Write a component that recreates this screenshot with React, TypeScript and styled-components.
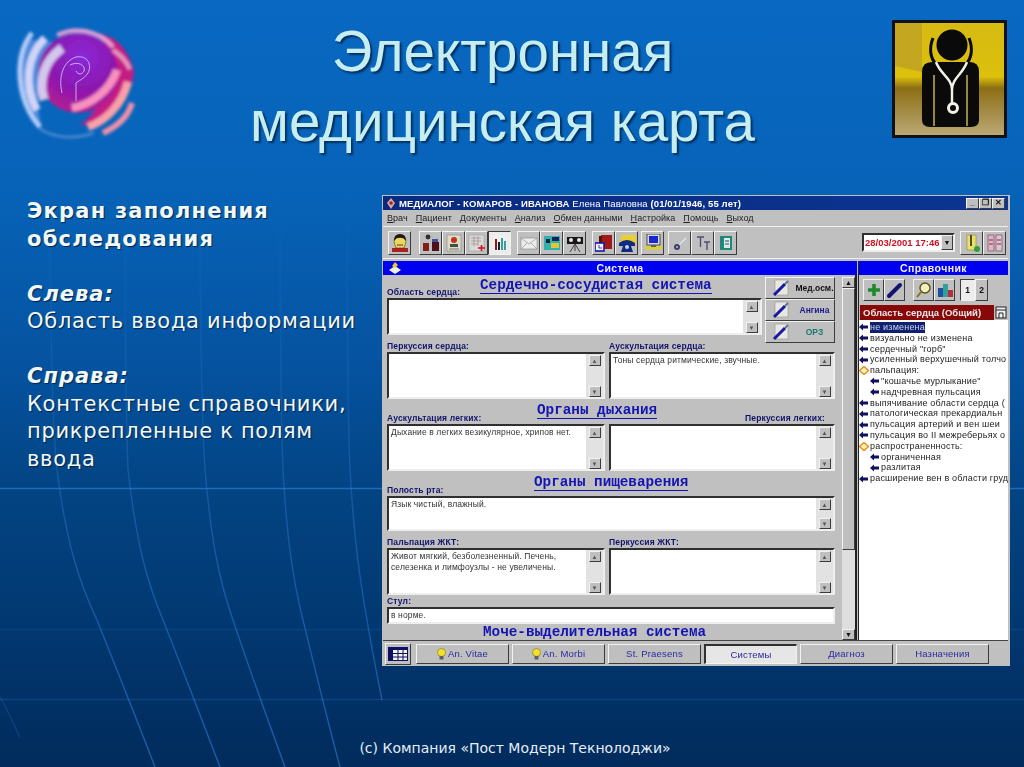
import * as React from 'react';
import styled, {createGlobalStyle} from 'styled-components';

const Global = createGlobalStyle`
  html, body { margin: 0; padding: 0; background: #012a5c; }
`;

const bevel = `
  border: 1px solid;
  border-color: #f2f2f2 #3c3c3c #3c3c3c #f2f2f2;
  background: #bfbfbf;
  box-sizing: border-box;
`;

const sunken = `
  border: 2px solid;
  border-color: #303030 #eeeeee #eeeeee #303030;
  box-sizing: border-box;
`;

/* ---------- slide ---------- */

const Slide = styled.div`
  position: relative;
  width: 1024px;
  height: 767px;
  overflow: hidden;
  display: flex;
  flex-direction: column;
  background: linear-gradient(180deg, #0968c2 0px, #0763b8 190px, #05529f 370px, #034483 490px, #023a74 600px, #012b5c 767px);
`;

const Backdrop = styled.svg`
  position: absolute;
  inset: 0;
`;

const Header = styled.header`
  position: relative;
  height: 195px;
  flex: none;
  display: flex;
  align-items: flex-start;
  box-sizing: border-box;
  padding: 20px 17px 0 10px;
`;

const Title = styled.h1`
  flex: 1;
  margin: -3px 0 0;
  padding: 0 27px 0 0;
  text-align: center;
  font: 400 56.5px/70px "Liberation Sans", sans-serif;
  color: #c6eef0;
  text-shadow: 2px 2px 2px #02305f;
  white-space: nowrap;
`;

const Body = styled.main`
  position: relative;
  display: flex;
  flex: none;
  height: 472px;
`;

const Notes = styled.section`
  width: 382px;
  flex: none;
  box-sizing: border-box;
  padding: 3px 0 0 27px;
  font: 400 21px/27.5px "DejaVu Sans", sans-serif;
  letter-spacing: 0.7px;
  color: #f2f8f8;
  text-shadow: 1px 1px 1px #02254d;
`;

const Note = styled.p`
  margin: 0 0 27.5px;
`;

const Strong = styled.b`
  font-weight: 700;
  letter-spacing: 1.2px;
`;

const Side = styled.b`
  font-weight: 700;
  font-style: italic;
  letter-spacing: 1px;
`;

const Footer = styled.footer`
  position: relative;
  margin-top: 71px;
  padding-left: 6px;
  text-align: center;
  font: 400 14px/20px "DejaVu Sans", sans-serif;
  color: #e6eef6;
`;

/* ---------- application window ---------- */

const Win = styled.div`
  width: 628px;
  height: 471px;
  flex: none;
  display: flex;
  flex-direction: column;
  box-sizing: border-box;
  padding: 1px 2px 0 1px;
  background: #c0c0c0;
  filter: blur(0.35px);
  font-family: "Liberation Sans", sans-serif;
  overflow: hidden;
`;

const TitleBar = styled.div`
  height: 14px;
  flex: none;
  display: flex;
  align-items: center;
  gap: 3px;
  padding: 0 2px 0 3px;
  background: linear-gradient(90deg, #0a2a80, #0b3590);
  color: #fff;
  font-size: 9.5px;
  font-weight: 700;
  letter-spacing: 0.12px;
  white-space: nowrap;
`;

const TitleText = styled.span`
  flex: 1;
`;

const Thin = styled.span`
  font-weight: 400;
`;

const Caption = styled.div`
  display: flex;
  margin-right: 1px;
`;

const CaptionBtn = styled.div`
  ${bevel}
  width: 13px;
  height: 11px;
  display: flex;
  align-items: center;
  justify-content: center;
  color: #111;
  font-size: 8px;
  font-weight: 700;
  line-height: 1;
`;

const MenuBar = styled.nav`
  height: 16px;
  flex: none;
  display: flex;
  align-items: center;
  gap: 8px;
  padding: 0 4px;
  font-size: 9px;
  color: #222;
  border-bottom: 1px solid #f0f0f0;
`;

const MenuItem = styled.span`
  letter-spacing: 0.05px;
`;

const Ul = styled.u`
  text-underline-offset: 1px;
`;

const ToolBar = styled.div`
  height: 32px;
  flex: none;
  display: flex;
  align-items: center;
  padding: 0 2px 0 5px;
  box-sizing: border-box;
  border-bottom: 1px solid #f0f0f0;
`;

const ToolGroup = styled.div<{$gap: number}>`
  display: flex;
  margin-right: ${p => p.$gap}px;
`;

const ToolBtn = styled.div<{$on?: boolean; $w?: number}>`
  ${bevel}
  width: ${p => p.$w ?? 23}px;
  height: 24px;
  display: flex;
  align-items: center;
  justify-content: center;
  ${p => p.$on && 'background: #ececec; border-color: #3c3c3c #f2f2f2 #f2f2f2 #3c3c3c;'}
`;

const DateBox = styled.div`
  ${sunken}
  width: 93px;
  height: 19px;
  margin-left: auto;
  margin-right: 5px;
  background: #fff;
  display: flex;
  align-items: center;
  justify-content: space-between;
  color: #d01020;
  font-size: 9.5px;
  font-weight: 700;
  padding-left: 1px;
`;

const DropBtn = styled.div`
  ${bevel}
  width: 12px;
  height: 15px;
  color: #111;
  font-size: 7px;
  display: flex;
  align-items: center;
  justify-content: center;
`;

const Panes = styled.div`
  flex: 1;
  min-height: 0;
  display: flex;
  margin-top: 2px;
`;

const LeftPane = styled.div`
  width: 474px;
  flex: none;
  display: flex;
  flex-direction: column;
`;

const RightPane = styled.div`
  flex: 1;
  min-width: 0;
  margin-left: 1px;
  display: flex;
  flex-direction: column;
  border-left: 1px solid #222;
`;

const PaneHead = styled.div`
  height: 14px;
  flex: none;
  position: relative;
  display: flex;
  align-items: center;
  justify-content: center;
  background: #0000f0;
  color: #eef;
  font-size: 10.5px;
  font-weight: 700;
  letter-spacing: 0.4px;
`;

const PaneIcon = styled.svg`
  position: absolute;
  left: 5px;
  top: 0;
`;

const FormWrap = styled.div`
  flex: 1;
  min-height: 0;
  display: flex;
  border-right: 2px solid #222;
`;

const Form = styled.div`
  flex: 1;
  min-width: 0;
  overflow: hidden;
  padding: 2px 7px 0 4px;
  display: flex;
  flex-direction: column;
`;

const TopRow = styled.div`
  display: flex;
  gap: 3px;
  height: 58px;
  flex: none;
`;

const TopMain = styled.div`
  flex: 1;
  min-width: 0;
`;

const QuickCol = styled.div`
  width: 70px;
  flex: none;
  display: flex;
  flex-direction: column;
`;

const QuickBtn = styled.div`
  ${bevel}
  height: 22px;
  flex: none;
  display: flex;
  align-items: center;
  gap: 3px;
  padding-left: 6px;
  font-size: 8.5px;
  font-weight: 700;
`;

const QuickText = styled.span<{$color: string}>`
  flex: 1;
  text-align: center;
  color: ${p => p.$color};
`;

const LabelLine = styled.div<{$h: number}>`
  height: ${p => p.$h}px;
  flex: none;
  position: relative;
  display: flex;
  align-items: flex-end;
  justify-content: space-between;
`;

const HalfLine = styled.div<{$h: number}>`
  height: ${p => p.$h}px;
  flex: none;
  display: grid;
  grid-template-columns: 222px 1fr;
  align-items: flex-end;
`;

const Label = styled.span<{$right?: boolean}>`
  font-size: 8.5px;
  line-height: 10px;
  font-weight: 700;
  color: #12126a;
  letter-spacing: 0.15px;
  white-space: nowrap;
  padding-bottom: 1px;
  ${p => p.$right && 'padding-right: 10px;'}
`;

const Heading = styled.span<{$left: number; $top?: number}>`
  position: absolute;
  left: ${p => p.$left}px;
  top: ${p => p.$top ?? 0}px;
  font: 700 14.3px/16px "Liberation Mono", monospace;
  color: #1414b4;
  border-bottom: 1px solid #1414b4;
  white-space: nowrap;
`;

const Pair = styled.div`
  display: grid;
  grid-template-columns: 218px 1fr;
  gap: 4px;
  flex: none;
`;

const Box = styled.div<{$h: number}>`
  ${sunken}
  height: ${p => p.$h}px;
  background: #fff;
  display: flex;
  min-width: 0;
`;

const BoxText = styled.div`
  flex: 1;
  min-width: 0;
  padding: 1px 2px;
  font-size: 8.5px;
  line-height: 11px;
  color: #333;
  letter-spacing: 0.12px;
`;

const MiniBar = styled.div`
  width: 17px;
  flex: none;
  display: flex;
  flex-direction: column;
  justify-content: space-between;
  align-items: center;
  background: #e2e2e2;
  padding: 1px 0 0;
  box-sizing: border-box;
`;

const MiniBtn = styled.div`
  ${bevel}
  width: 12px;
  height: 11px;
  color: #555;
  font-size: 6px;
  line-height: 1;
  display: flex;
  align-items: center;
  justify-content: center;
`;

const MainBar = styled.div`
  width: 13px;
  flex: none;
  margin: 2px 0 0;
  display: flex;
  flex-direction: column;
  background: #dedede;
`;

const MainBtn = styled.div`
  ${bevel}
  height: 11px;
  flex: none;
  color: #111;
  font-size: 7px;
  line-height: 1;
  display: flex;
  align-items: center;
  justify-content: center;
`;

const MainThumb = styled.div`
  ${bevel}
  height: 262px;
  flex: none;
`;

const MainTrack = styled.div`
  flex: 1;
`;

const RefTools = styled.div`
  height: 30px;
  flex: none;
  display: flex;
  align-items: center;
  padding: 0 0 0 4px;
  box-sizing: border-box;
`;

const SmallTool = styled.div<{$on?: boolean; $w?: number; $ml?: number}>`
  ${bevel}
  width: ${p => p.$w ?? 21}px;
  height: 22px;
  margin-left: ${p => p.$ml ?? 0}px;
  display: flex;
  align-items: center;
  justify-content: center;
  font-size: 8.5px;
  font-weight: 700;
  color: #111;
  ${p => p.$on && 'background: #ececec; border-color: #3c3c3c #f2f2f2 #f2f2f2 #3c3c3c;'}
`;

const RefHeader = styled.div`
  height: 15px;
  flex: none;
  display: flex;
  align-items: stretch;
  margin-left: 1px;
`;

const RefName = styled.div`
  flex: 1;
  background: #860808;
  color: #f0e8e8;
  font-size: 9.5px;
  font-weight: 700;
  line-height: 15px;
  padding-left: 3px;
  white-space: nowrap;
  overflow: hidden;
`;

const RefIcon = styled.div`
  width: 14px;
  flex: none;
  display: flex;
  align-items: center;
  justify-content: center;
`;

const Tree = styled.ul`
  flex: 1;
  min-height: 0;
  margin: 0;
  padding: 2px 0 0;
  list-style: none;
  background: #fff;
  overflow: hidden;
`;

const TreeRow = styled.li<{$sub?: boolean}>`
  height: 10.8px;
  display: flex;
  align-items: center;
  gap: 1px;
  padding-left: ${p => (p.$sub ? 11 : 0)}px;
  font-size: 9px;
  line-height: 10.8px;
  letter-spacing: 0.2px;
  color: #222;
  white-space: nowrap;
`;

const Selected = styled.span`
  background: #10206e;
  color: #c8d4f0;
`;

const BottomBar = styled.div`
  height: 26px;
  flex: none;
  display: flex;
  align-items: center;
  padding: 0 0 0 2px;
  border-top: 1px solid #444;
  box-sizing: border-box;
`;

const GridBtn = styled.div`
  ${bevel}
  width: 26px;
  height: 22px;
  margin-right: 5px;
  display: flex;
  align-items: center;
  justify-content: center;
`;

const Tab = styled.div<{$on?: boolean}>`
  ${bevel}
  width: 93px;
  height: 20px;
  margin-right: 3px;
  display: flex;
  align-items: center;
  justify-content: center;
  gap: 2px;
  font-size: 9.5px;
  letter-spacing: 0.2px;
  color: #2a2aa0;
  ${p => p.$on && 'background: #e6e6e6; border-color: #303030 #f2f2f2 #f2f2f2 #303030; border-width: 2px 1px 1px 2px;'}
`;

/* ---------- drawings ---------- */

const Logo = () => (
  <svg width="130" height="118" viewBox="0 0 130 118" style={{flex: 'none', marginTop: 5}}>
    <defs>
      <radialGradient id="ball" cx="0.55" cy="0.3" r="0.8">
        <stop offset="0" stopColor="#8a28d8" />
        <stop offset="0.5" stopColor="#8c18b0" />
        <stop offset="1" stopColor="#c01c88" />
      </radialGradient>
      <filter id="soft" x="-20%" y="-20%" width="140%" height="140%">
        <feGaussianBlur stdDeviation="1.8" />
      </filter>
      <filter id="softer">
        <feGaussianBlur stdDeviation="0.5" />
      </filter>
    </defs>
    <g filter="url(#soft)" fill="none">
      <path d="M16 14 C0 40 6 82 32 104 C24 70 28 40 50 18 Z" fill="#5f93e6" opacity="0.75" />
      <path d="M70 100 C98 102 122 76 124 46 C118 22 104 10 86 8 C112 34 100 78 70 100 Z" fill="#c41c84" />
      <circle cx="68" cy="48" r="40" fill="url(#ball)" />
      <path d="M22 8 C4 30 6 75 30 102" stroke="#b4ccf8" strokeWidth="5" />
      <path d="M35 13 C16 32 14 62 27 85" stroke="#d0d4f6" strokeWidth="8" />
      <path d="M52 23 C34 36 28 56 34 75" stroke="#d4c6ec" strokeWidth="9" />
      <path d="M47 10 C64 2 88 4 103 22" stroke="#e8a0d8" strokeWidth="4" />
      <path d="M103 25 Q114 32 120 44" stroke="#e898c0" strokeWidth="4" />
      <path d="M62 83 C80 80 100 66 107 45" stroke="#f890c0" strokeWidth="8" />
      <path d="M78 102 C96 96 112 80 118 57" stroke="#f8a0a8" strokeWidth="8" />
      <path d="M93 108 C106 102 118 92 122 78" stroke="#f090a8" strokeWidth="6" />
      <path d="M30 104 C46 114 66 114 84 108" stroke="#a8b8f0" strokeWidth="2.5" opacity="0.45" />
    </g>
    <g filter="url(#softer)" fill="none" stroke="#c8c0f0" strokeWidth="0.9">
      <path d="M52 68 C48 50 54 36 66 32 C78 30 82 40 78 48 C74 54 68 56 66 58 V76" />
      <path d="M60 40 C68 36 76 40 74 46 C72 50 68 50 66 46" />
    </g>
  </svg>
);

const Doctor = () => (
  <svg width="115" height="118" viewBox="0 0 115 118" style={{flex: 'none'}}>
    <defs>
      <linearGradient id="gold" x1="0" y1="0" x2="0" y2="1">
        <stop offset="0" stopColor="#d6ba12" />
        <stop offset="0.48" stopColor="#dcc00c" />
        <stop offset="0.58" stopColor="#8c6e14" />
        <stop offset="1" stopColor="#bcaa78" />
      </linearGradient>
    </defs>
    <rect x="1.5" y="1.5" width="112" height="115" fill="url(#gold)" stroke="#101018" strokeWidth="3" />
    <path d="M3 3 H30 V52 L3 46 Z" fill="#c4a620" />
    <path d="M41 18 C37 28 38 38 44 44 M77 18 C81 28 80 38 74 44" stroke="#0a0a0a" strokeWidth="3" fill="none" />
    <circle cx="60" cy="25" r="15.5" fill="#0a0a0a" />
    <path d="M40 42 H78 Q87 42 87 52 V100 Q87 107 79 107 H38 Q30 107 30 100 V52 Q30 42 40 42 Z" fill="#0a0a0a" />
    <path d="M42 55 V106 M75 55 V106" stroke="#b8a850" strokeWidth="1.6" />
    <path d="M44 42 C48 54 60 58 60 70 V84 M75 42 C71 54 60 58 60 70" stroke="#f2f2e8" strokeWidth="2.4" fill="none" />
    <circle cx="61" cy="88" r="4.5" fill="none" stroke="#f2f2e8" strokeWidth="3" />
  </svg>
);

const Pencil = () => (
  <svg width="20" height="18" viewBox="0 0 20 18">
    <rect x="3" y="1" width="13" height="15" fill="#e8e8e0" stroke="#888" strokeWidth="0.5" />
    <path d="M2 16 L13 5" stroke="#1818a0" strokeWidth="3" />
    <path d="M13 5 L16 2" stroke="#607090" strokeWidth="2" />
  </svg>
);

const Lamp = () => (
  <svg width="9" height="12" viewBox="0 0 9 12">
    <circle cx="4.5" cy="4.5" r="4" fill="#f0e030" stroke="#807010" strokeWidth="0.6" />
    <rect x="2.5" y="8" width="4" height="3.5" fill="#606060" />
  </svg>
);

const Bullet = () => (
  <svg width="10" height="8" viewBox="0 0 10 8" style={{flex: 'none'}}>
    <path d="M0 4 L4 0.5 V2.5 H9 V5.5 H4 V7.5 Z" fill="#10105c" />
  </svg>
);

const Diamond = () => (
  <svg width="10" height="9" viewBox="0 0 10 9" style={{flex: 'none'}}>
    <path d="M5 0.5 L9.5 4.5 L5 8.5 L0.5 4.5 Z" fill="#fff4c0" stroke="#e88a10" strokeWidth="1.4" />
  </svg>
);

const icons: Record<string, React.ReactNode> = {
  face: (
    <>
      <rect x="1" y="14" width="16" height="4" fill="#b02020" />
      <path d="M3 8 Q3 1 9 1 Q15 1 15 8 L13 14 H5 Z" fill="#e8d860" stroke="#222" strokeWidth="0.5" />
      <path d="M3 7 Q3 0 9 0 Q15 0 15 7 Q12 3 9 4 Q6 3 3 7 Z" fill="#201810" />
      <path d="M6 11 H12" stroke="#802010" strokeWidth="1" />
    </>
  ),
  desk: (
    <>
      <rect x="1" y="9" width="6" height="8" fill="#802018" />
      <rect x="10" y="8" width="7" height="9" fill="#501018" />
      <circle cx="6" cy="3" r="2.4" fill="#303030" />
      <rect x="10" y="5" width="6" height="3" fill="#4050a0" />
    </>
  ),
  card: (
    <>
      <rect x="2" y="1" width="14" height="16" fill="#dcdcc8" stroke="#777" strokeWidth="0.5" />
      <circle cx="9" cy="6" r="3" fill="#c03020" />
      <rect x="5" y="10" width="8" height="3" fill="#405040" />
      <path d="M4 15 H14" stroke="#777" />
    </>
  ),
  sheet: (
    <>
      <rect x="1" y="1" width="15" height="16" fill="#d8d8d8" stroke="#999" strokeWidth="0.5" />
      <path d="M3 4 H13 M3 7 H13 M3 10 H10 M6 2 V12 M10 2 V12" stroke="#a09090" strokeWidth="0.7" />
      <path d="M10 14 H17 M13.5 11 V17" stroke="#d01020" strokeWidth="1.6" />
    </>
  ),
  chart: (
    <>
      <rect x="2" y="1" width="14" height="16" fill="#f0f0f0" />
      <rect x="4" y="5" width="2" height="11" fill="#901818" />
      <rect x="7" y="8" width="2" height="8" fill="#202020" />
      <path d="M11 4 L11 16 M14 7 L14 16" stroke="#30a0a0" strokeWidth="2" />
    </>
  ),
  mail: (
    <>
      <rect x="1" y="4" width="16" height="11" fill="#ececec" stroke="#888" strokeWidth="0.6" />
      <path d="M1 4 L9 10 L17 4 M1 15 L7 9 M17 15 L11 9" stroke="#888" strokeWidth="0.6" fill="none" />
    </>
  ),
  board: (
    <>
      <rect x="1" y="2" width="16" height="14" fill="#30b0b0" />
      <rect x="9" y="3" width="7" height="4" fill="#182060" />
      <rect x="8" y="9" width="8" height="5" fill="#e0c830" />
      <rect x="3" y="5" width="4" height="4" fill="#102040" />
    </>
  ),
  camera: (
    <>
      <rect x="1" y="3" width="16" height="7" fill="#181818" />
      <circle cx="5" cy="6" r="2" fill="#e8e8e8" />
      <circle cx="13" cy="6" r="2" fill="#e8e8e8" />
      <path d="M9 10 L4 18 M9 10 L14 18 M9 10 V17" stroke="#504040" strokeWidth="1" />
    </>
  ),
  book: (
    <>
      <rect x="6" y="1" width="11" height="14" fill="#a01818" />
      <rect x="4" y="2" width="3" height="14" fill="#600c0c" />
      <rect x="0" y="9" width="9" height="8" fill="#f0f0ff" stroke="#1818a0" strokeWidth="1.6" />
      <path d="M4 11 V14 H7" stroke="#1818a0" strokeWidth="0.8" fill="none" />
    </>
  ),
  phone: (
    <>
      <path d="M3 1 H18 V10 H3 Z" fill="#e8d030" />
      <path d="M1 9 Q9 3 17 9 V12 H13 L15 18 H3 L5 12 H1 Z" fill="#102a80" />
      <circle cx="9" cy="13" r="2" fill="#c8d0f0" />
    </>
  ),
  monitor: (
    <>
      <rect x="3" y="0" width="13" height="11" fill="#d8d8d8" stroke="#303030" strokeWidth="0.8" />
      <rect x="5" y="2" width="9" height="7" fill="#1828d0" />
      <path d="M1 14 H18" stroke="#e0d020" strokeWidth="3" />
      <rect x="7" y="11" width="5" height="2" fill="#606060" />
    </>
  ),
  tool: (
    <>
      <path d="M7 12 L15 4" stroke="#e0e0e8" strokeWidth="1.6" />
      <circle cx="6" cy="13" r="3" fill="#404070" />
      <circle cx="6" cy="13" r="1" fill="#c0c0c0" />
    </>
  ),
  type: <path d="M3 3 H10 M6.5 3 V13 M10 8 H16 M13 8 V16" stroke="#505070" strokeWidth="1.4" />,
  binder: (
    <>
      <rect x="3" y="2" width="12" height="14" fill="#208878" />
      <rect x="7" y="4" width="6" height="10" fill="#e0e8e8" />
      <path d="M8 7 H12 M8 10 H12" stroke="#205070" />
    </>
  ),
  boots: (
    <>
      <rect x="4" y="1" width="9" height="15" fill="#e8e070" stroke="#807020" strokeWidth="0.5" />
      <path d="M8 1 V12" stroke="#302810" strokeWidth="1.6" />
      <circle cx="14" cy="15" r="3" fill="#30a030" />
    </>
  ),
  grid2: (
    <>
      <rect x="2" y="1" width="6" height="16" fill="#d8b8c8" stroke="#803050" strokeWidth="0.6" />
      <rect x="10" y="1" width="6" height="16" fill="#d8c8d0" stroke="#803050" strokeWidth="0.6" />
      <path d="M3 6 H7 M3 10 H7 M11 6 H15 M11 10 H15" stroke="#a02040" />
    </>
  ),
  plus: <path d="M9 3 V15 M3 9 H15" stroke="#1e8a30" strokeWidth="3.6" />,
  brush: <path d="M3 15 L14 4" stroke="#14146e" strokeWidth="4" strokeLinecap="round" />,
  lens: (
    <>
      <circle cx="10" cy="7" r="5" fill="#f0f0c0" stroke="#605010" strokeWidth="1.4" />
      <path d="M6 11 L2 16" stroke="#807020" strokeWidth="2" />
    </>
  ),
  jars: (
    <>
      <rect x="2" y="7" width="5" height="9" fill="#2050a0" />
      <rect x="7" y="3" width="5" height="13" fill="#30a098" />
      <rect x="12" y="9" width="5" height="7" fill="#b03040" />
    </>
  ),
};

const Tool = ({name}: {name: string}) => (
  <svg width="18" height="18" viewBox="0 0 18 18">
    {icons[name]}
  </svg>
);

const Field = ({h, text, bar = true}: {h: number; text?: React.ReactNode; bar?: boolean}) => (
  <Box $h={h}>
    <BoxText>{text}</BoxText>
    {bar && (
      <MiniBar>
        <MiniBtn>▲</MiniBtn>
        <MiniBtn>▼</MiniBtn>
      </MiniBar>
    )}
  </Box>
);

const Menu = ({first, rest}: {first: string; rest: string}) => (
  <MenuItem>
    <Ul>{first}</Ul>
    {rest}
  </MenuItem>
);

const toolGroups: {gap: number; items: string[]}[] = [
  {gap: 8, items: ['face']},
  {gap: 6, items: ['desk', 'card', 'sheet', 'chart']},
  {gap: 6, items: ['mail', 'board', 'camera']},
  {gap: 3, items: ['book', 'phone']},
  {gap: 4, items: ['monitor']},
  {gap: 0, items: ['tool', 'type', 'binder']},
];

const treeItems: {text: string; sub?: boolean; group?: boolean; on?: boolean}[] = [
  {text: 'не изменена', on: true},
  {text: 'визуально  не изменена'},
  {text: 'сердечный "горб"'},
  {text: 'усиленный верхушечный толчо'},
  {text: 'пальпация:', group: true},
  {text: '"кошачье мурлыкание"', sub: true},
  {text: 'надчревная  пульсация', sub: true},
  {text: 'выпячивание области сердца ('},
  {text: 'патологическая прекардиальн'},
  {text: 'пульсация артерий и вен шеи'},
  {text: 'пульсация во II межреберьях о'},
  {text: 'распространенность:', group: true},
  {text: 'органиченная', sub: true},
  {text: 'разлитая', sub: true},
  {text: 'расширение вен в области груд'},
];

const tabs: {text: string; lamp?: boolean; on?: boolean}[] = [
  {text: 'An. Vitae', lamp: true},
  {text: 'An. Morbi', lamp: true},
  {text: 'St. Praesens'},
  {text: 'Системы', on: true},
  {text: 'Диагноз'},
  {text: 'Назначения'},
];

const AppWindow = () => (
  <Win>
    <TitleBar>
      <svg width="10" height="11" viewBox="0 0 10 11">
        <path d="M5 0 L9 5 L5 11 L1 5 Z" fill="#d8a8a0" />
        <circle cx="5" cy="5" r="1.8" fill="#b02020" />
      </svg>
      <TitleText>
        МЕДИАЛОГ - КОМАРОВ - ИВАНОВА <Thin>Елена Павловна</Thin> (01/01/1946, 55 лет)
      </TitleText>
      <Caption>
        <CaptionBtn>_</CaptionBtn>
        <CaptionBtn>❐</CaptionBtn>
        <CaptionBtn>✕</CaptionBtn>
      </Caption>
    </TitleBar>
    <MenuBar>
      <Menu first="В" rest="рач" />
      <Menu first="П" rest="ациент" />
      <Menu first="Д" rest="окументы" />
      <Menu first="А" rest="нализ" />
      <Menu first="О" rest="бмен данными" />
      <Menu first="Н" rest="астройка" />
      <Menu first="П" rest="омощь" />
      <Menu first="В" rest="ыход" />
    </MenuBar>
    <ToolBar>
      {toolGroups.map((group, i) => (
        <ToolGroup key={i} $gap={group.gap}>
          {group.items.map(name => (
            <ToolBtn key={name} $on={name === 'chart'}>
              <Tool name={name} />
            </ToolBtn>
          ))}
        </ToolGroup>
      ))}
      <DateBox>
        28/03/2001 17:46
        <DropBtn>▼</DropBtn>
      </DateBox>
      <ToolGroup $gap={0}>
        <ToolBtn>
          <Tool name="boots" />
        </ToolBtn>
        <ToolBtn>
          <Tool name="grid2" />
        </ToolBtn>
      </ToolGroup>
    </ToolBar>
    <Panes>
      <LeftPane>
        <PaneHead>
          <PaneIcon width="14" height="14" viewBox="0 0 14 14">
            <path d="M1 9 L7 5 L13 9 L7 13 Z" fill="#f0f0d8" />
            <path d="M4 5 L7 1 L10 4 L7 7 Z" fill="#e8c830" />
          </PaneIcon>
          Система
        </PaneHead>
        <FormWrap>
          <Form>
            <TopRow>
              <TopMain>
                <LabelLine $h={21}>
                  <Label>Область сердца:</Label>
                  <Heading $left={93}>Сердечно-сосудистая система</Heading>
                </LabelLine>
                <Field h={37} />
              </TopMain>
              <QuickCol>
                <QuickBtn>
                  <Pencil />
                  <QuickText $color="#111">Мед.осм.</QuickText>
                </QuickBtn>
                <QuickBtn>
                  <Pencil />
                  <QuickText $color="#1a1a8a">Ангина</QuickText>
                </QuickBtn>
                <QuickBtn>
                  <Pencil />
                  <QuickText $color="#1a7a70">ОРЗ</QuickText>
                </QuickBtn>
              </QuickCol>
            </TopRow>
            <HalfLine $h={17}>
              <Label>Перкуссия сердца:</Label>
              <Label>Аускультация сердца:</Label>
            </HalfLine>
            <Pair>
              <Field h={47} />
              <Field h={47} text="Тоны сердца ритмические, звучные." />
            </Pair>
            <LabelLine $h={25}>
              <Label>Аускультация легких:</Label>
              <Heading $left={150} $top={3}>
                Органы дыхания
              </Heading>
              <Label $right>Перкуссия легких:</Label>
            </LabelLine>
            <Pair>
              <Field h={47} text="Дыхание в легких везикулярное, хрипов нет." />
              <Field h={47} />
            </Pair>
            <LabelLine $h={25}>
              <Label>Полость рта:</Label>
              <Heading $left={147} $top={3}>
                Органы пищеварения
              </Heading>
            </LabelLine>
            <Field h={37} text="Язык чистый, влажный." />
            <HalfLine $h={17}>
              <Label>Пальпация ЖКТ:</Label>
              <Label>Перкуссия ЖКТ:</Label>
            </HalfLine>
            <Pair>
              <Field
                h={47}
                text={
                  <>
                    Живот мягкий, безболезненный. Печень,
                    <br />
                    селезенка и лимфоузлы - не увеличены.
                  </>
                }
              />
              <Field h={47} />
            </Pair>
            <LabelLine $h={12}>
              <Label>Стул:</Label>
            </LabelLine>
            <Field h={17} bar={false} text="в норме." />
            <LabelLine $h={16}>
              <Heading $left={96}>Моче-выделительная система</Heading>
            </LabelLine>
          </Form>
          <MainBar>
            <MainBtn>▲</MainBtn>
            <MainThumb />
            <MainTrack />
            <MainBtn>▼</MainBtn>
          </MainBar>
        </FormWrap>
      </LeftPane>
      <RightPane>
        <PaneHead>Справочник</PaneHead>
        <RefTools>
          <SmallTool>
            <Tool name="plus" />
          </SmallTool>
          <SmallTool>
            <Tool name="brush" />
          </SmallTool>
          <SmallTool $ml={8}>
            <Tool name="lens" />
          </SmallTool>
          <SmallTool>
            <Tool name="jars" />
          </SmallTool>
          <SmallTool $on $w={15} $ml={5}>
            1
          </SmallTool>
          <SmallTool $w={13}>2</SmallTool>
        </RefTools>
        <RefHeader>
          <RefName>Область сердца (Общий)</RefName>
          <RefIcon>
            <svg width="12" height="13" viewBox="0 0 12 13">
              <rect x="1" y="1" width="10" height="11" fill="#f0f0f0" stroke="#222" />
              <path d="M1 4 H11 M4 7 H8 M4 7 V12 M8 7 V12" stroke="#222" />
            </svg>
          </RefIcon>
        </RefHeader>
        <Tree>
          {treeItems.map(item => (
            <TreeRow key={item.text} $sub={item.sub}>
              {item.group ? <Diamond /> : <Bullet />}
              {item.on ? <Selected>{item.text}</Selected> : item.text}
            </TreeRow>
          ))}
        </Tree>
      </RightPane>
    </Panes>
    <BottomBar>
      <GridBtn>
        <svg width="20" height="14" viewBox="0 0 20 14">
          <rect x="0.5" y="0.5" width="19" height="13" fill="#f0f0f0" stroke="#101060" />
          <rect x="0" y="0" width="20" height="3" fill="#101060" />
          <rect x="0" y="0" width="5" height="14" fill="#101060" />
          <path d="M10 3 V14 M15 3 V14 M5 6.5 H20 M5 10 H20" stroke="#101060" />
        </svg>
      </GridBtn>
      {tabs.map(tab => (
        <Tab key={tab.text} $on={tab.on}>
          {tab.lamp && <Lamp />}
          {tab.text}
        </Tab>
      ))}
    </BottomBar>
  </Win>
);

const App = () => (
  <>
    <Global />
    <Slide>
      <Backdrop width="1024" height="767" viewBox="0 0 1024 767" fill="none">
        <defs>
          <linearGradient id="fade" gradientUnits="userSpaceOnUse" x1="0" y1="180" x2="0" y2="767">
            <stop offset="0" stopColor="#2f7fd8" stopOpacity="0" />
            <stop offset="0.5" stopColor="#2f7fd8" stopOpacity="0.35" />
            <stop offset="1" stopColor="#2f7fd8" stopOpacity="0.6" />
          </linearGradient>
        </defs>
        <g stroke="#2f7fd8" strokeWidth="1.4">
          <path d="M-10 488.5 H1024" strokeOpacity="0.65" />
          <path d="M-10 629.5 H1024" strokeOpacity="0.14" />
          <path d="M-10 699.5 H1024" strokeOpacity="0.26" />
          <path d="M0 697 C8 710 14 725 20 738" strokeOpacity="0.25" />
        </g>
        <g stroke="url(#fade)" strokeWidth="1.4">
          <path d="M50 190 C50 320 52 420 57 470 C66 540 78 580 97 620 C115 665 135 715 155 767" />
          <path d="M125 190 C125 320 126 420 128 470 C136 540 146 580 163 620 C181 665 200 715 220 767" />
          <path d="M200 190 C200 320 202 420 205 470 C211 540 219 580 233 620 C248 665 266 715 285 767" />
          <path d="M280 190 C280 320 281 420 283 470 C287 540 293 580 303 620 C314 665 326 715 340 767" />
          <path d="M347 190 C347 320 348 420 350 470 C354 540 360 580 367 620 C372 650 377 675 382 700" />
        </g>
      </Backdrop>
      <Header>
        <Logo />
        <Title>
          Электронная
          <br />
          медицинская карта
        </Title>
        <Doctor />
      </Header>
      <Body>
        <Notes>
          <Note>
            <Strong>
              Экран заполнения
              <br />
              обследования
            </Strong>
          </Note>
          <Note>
            <Side>Слева:</Side>
            <br />
            Область ввода информации
          </Note>
          <Note>
            <Side>Справа:</Side>
            <br />
            Контекстные справочники,
            <br />
            прикрепленные к полям
            <br />
            ввода
          </Note>
        </Notes>
        <AppWindow />
      </Body>
      <Footer>(с) Компания «Пост Модерн Текнолоджи»</Footer>
    </Slide>
  </>
);

export default App;
